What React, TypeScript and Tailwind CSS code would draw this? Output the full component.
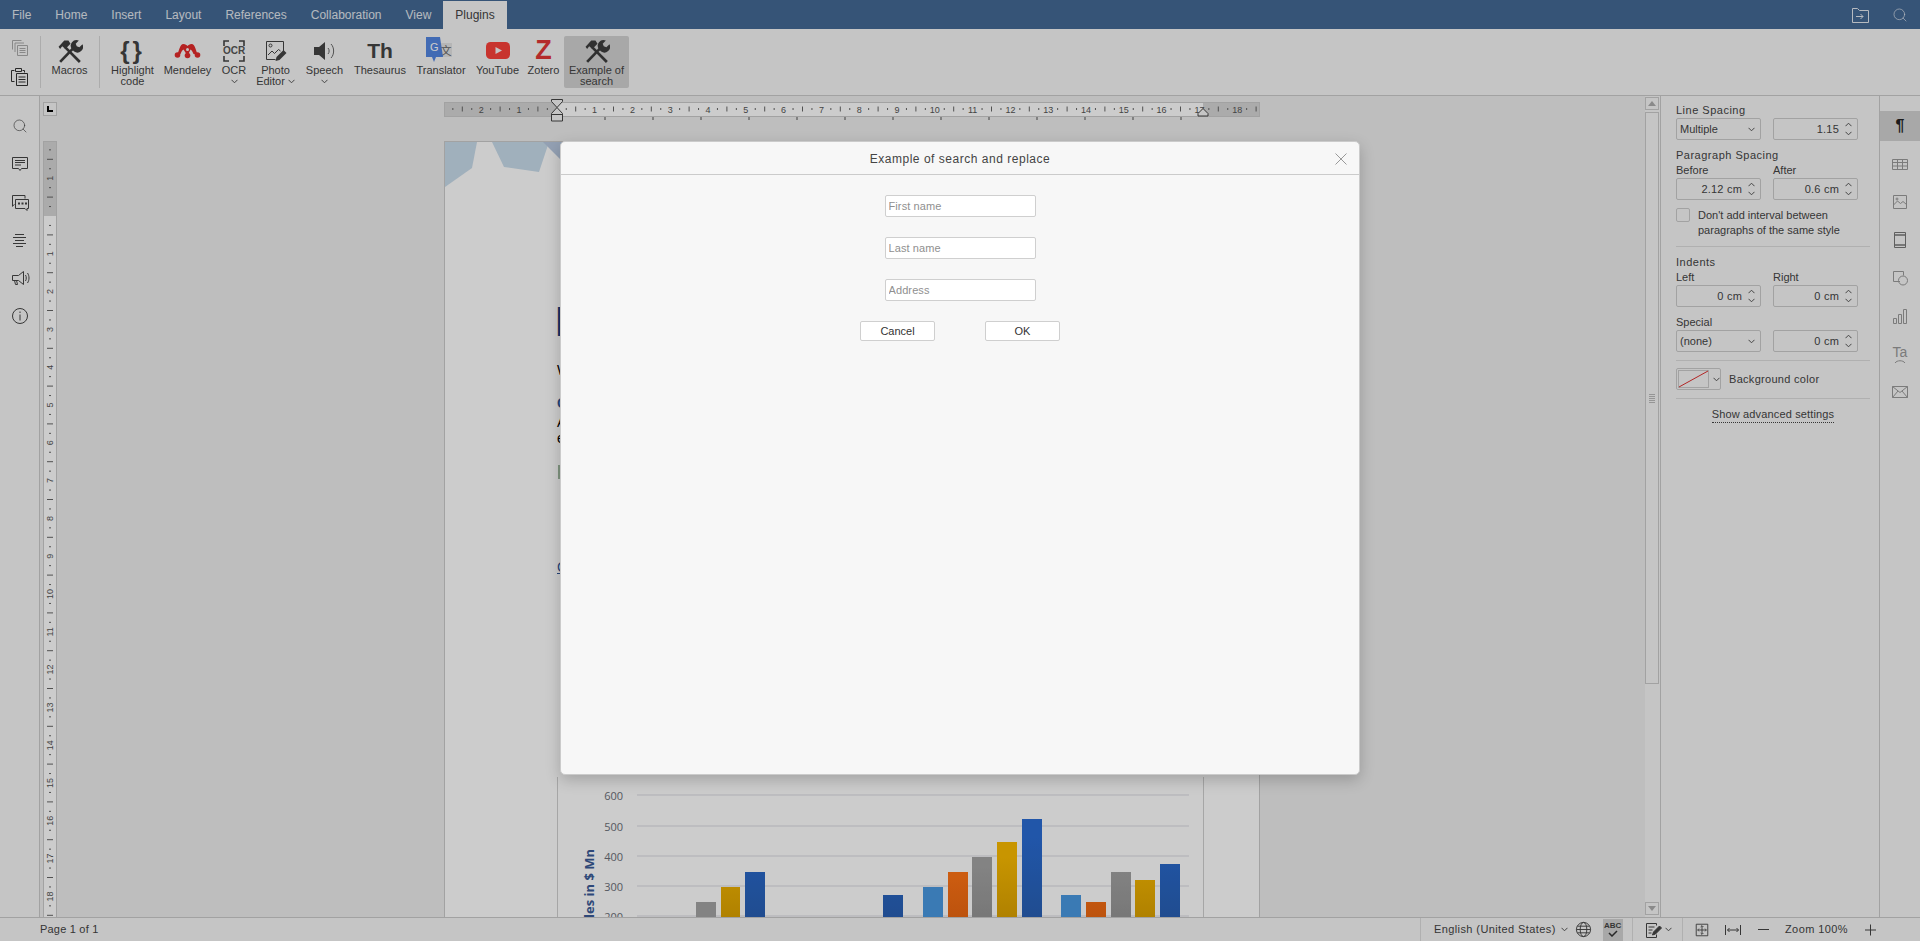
import type { ReactNode } from "react";
import { Search } from "lucide-react";

const tabs = ["File", "Home", "Insert", "Layout", "References", "Collaboration", "View"];

function Chevron({ className = "" }: { className?: string }) {
  return (
    <svg width="7" height="5" viewBox="0 0 7 5" className={className}>
      <path d="M0.5 0.8 3.5 3.8 6.5 0.8" fill="none" stroke="#555" strokeWidth="1" />
    </svg>
  );
}

function ChevronUp() {
  return (
    <svg width="7" height="5" viewBox="0 0 7 5">
      <path d="M0.5 4.2 3.5 1.2 6.5 4.2" fill="none" stroke="#555" strokeWidth="1" />
    </svg>
  );
}

function ToolsIcon() {
  return (
    <svg width="26" height="26" viewBox="0 0 25 25">
      <path d="M8 9 22 23M3 23 15.500 10" fill="none" stroke="#3d3d3d" strokeWidth="2.600" />
      <path d="M14.500 11A5.500 5.500 0 0 1 21 2.500L18 5.500l1 2.500 2.500 1 3-3A5.500 5.500 0 0 1 16.500 13z" fill="#3d3d3d" />
      <path d="M1.500 8.500 7 2.500h4l2 3-5 5-3-2.500-2 2.500z" fill="#3d3d3d" />
    </svg>
  );
}

function MendeleyIcon() {
  return (
    <svg width="27" height="16" viewBox="0 0 27 16">
      <g fill="#e32b2b">
        <circle cx="3.500" cy="12" r="2.800" />
        <circle cx="23.500" cy="12" r="2.800" />
        <circle cx="13.500" cy="12.500" r="2.800" />
        <path d="M3 12C5 9 5.500 1 9.500 1c2 0 3 1 4 2 1-1 2-2 4-2 4 0 4.500 8 6.500 11l-4.500-1c-1-2-1.500-4-3-4.500L14 12h-1L9.500 6.500C8 7 7.500 9 6.500 11z" />
      </g>
      <circle cx="13.500" cy="6.500" r="1.500" fill="#f7f7f7" />
    </svg>
  );
}

function OcrIcon() {
  return (
    <div className="relative flex h-[22px] w-[22px] items-center justify-center">
      <svg width="22" height="22" viewBox="0 0 22 22" className="absolute inset-0">
        <path d="M1 6V1h5M16 1h5v5M21 16v5h-5M6 21H1v-5" fill="none" stroke="#444" strokeWidth="1.600" />
      </svg>
      <span className="text-[10px] leading-none font-bold text-[#555]">OCR</span>
    </div>
  );
}

function PhotoIcon() {
  return (
    <svg width="22" height="22" viewBox="0 0 22 22">
      <path d="M1.500 1.500h17v10M1.500 1.500v18h9" fill="none" stroke="#444" />
      <circle cx="5.500" cy="5.500" r="1.500" fill="none" stroke="#444" />
      <path d="M3 15l4-4 2.500 2.500 4-4 2 1.500" fill="none" stroke="#444" />
      <path d="M10.500 21l1-4 7-7 3 3-7 7z" fill="#444" />
    </svg>
  );
}

function SpeechIcon() {
  return (
    <svg width="24" height="22" viewBox="0 0 24 22">
      <path d="M1 7h5l6-5v18l-6-5H1z" fill="#444" />
      <path d="M15 8c1.500 1.500 1.500 4.500 0 6M18 4c3.500 3.500 3.500 10.500 0 14" fill="none" stroke="#666" />
    </svg>
  );
}

function TranslatorIcon() {
  return (
    <svg width="30" height="28" viewBox="0 0 30 28">
      <rect x="13" y="6" width="13" height="14" fill="#e4e4e4" />
      <text x="14.500" y="17.500" fontSize="11" fill="#666" fontFamily="'Noto Sans CJK SC',sans-serif">文</text>
      <path d="M0 0h14l3 20H10l-2 5-2-5H0z" fill="#4a80e0" opacity="0.95" />
      <text x="4" y="14" fontSize="11" fill="#fff" fontFamily="'Liberation Sans',sans-serif">G</text>
    </svg>
  );
}

function YoutubeIcon() {
  return (
    <svg width="26" height="20" viewBox="0 0 26 20">
      <rect x="1" y="1" width="24" height="17" rx="4.500" fill="#fa413a" />
      <path d="M10.500 6 17 9.500 10.500 13z" fill="#f7f7f7" />
    </svg>
  );
}

function ToolButton({ w, icon, label, label2, chevron, active }: {
  w: string;
  icon: ReactNode;
  label: string;
  label2?: ReactNode;
  chevron?: boolean;
  active?: boolean;
}) {
  return (
    <div className={`flex h-[52px] shrink-0 flex-col items-center rounded-[2px] ${w} ${active ? "bg-[#d2d2d2]" : ""}`}>
      <div className="flex h-[29px] items-center justify-center">{icon}</div>
      <div className="text-center text-[11px] leading-[11px] whitespace-nowrap text-[#444]">{label}</div>
      {label2 && <div className="flex items-center gap-[3px] text-[11px] leading-[11px] whitespace-nowrap text-[#444]">{label2}</div>}
      {chevron && <Chevron className="mt-[3px]" />}
    </div>
  );
}

function Toolbar() {
  return (
    <div className="flex h-[67px] shrink-0 items-start border-b border-[#cbcbcb] bg-[#f7f7f7] pt-[7px]">
      <div className="flex h-[52px] w-[41px] shrink-0 flex-col items-center justify-center gap-[11px] border-r border-[#d8d8d8] pr-[1px]">
        <svg width="17" height="17" viewBox="0 0 17 17" fill="none" stroke="#aaa">
          <path d="M1.500 10.500v-9h9M4 13V4h9" />
          <path d="M6.500 6.500h10v10h-10zM8.500 9.500h6M8.500 11.500h6M8.500 13.500h6" />
        </svg>
        <svg width="17" height="19" viewBox="0 0 17 19" fill="none" stroke="#333">
          <path d="M3.500 14.500h-3v-11h3M4.500 1.500h6v3h-6zM11.500 3.500h2v2" />
          <path d="M5.500 6.500h11v12h-11zM7.500 10h7M7.500 12.500h7M7.500 15h7" />
        </svg>
      </div>
      <div className="flex h-[52px] w-[59px] shrink-0 flex-col items-center border-r border-[#d8d8d8] pr-[1px]">
        <div className="flex h-[29px] items-center"><ToolsIcon /></div>
        <div className="text-[11px] leading-[11px] text-[#444]">Macros</div>
      </div>
      <div className="ml-[6px] flex items-start gap-[2px]">
        <ToolButton
          w="w-[53px]"
          icon={<span className="text-[24px] leading-none font-bold tracking-[3px] text-[#444]">{"{}"}</span>}
          label="Highlight"
          label2="code"
        />
        <ToolButton w="w-[53px]" icon={<MendeleyIcon />} label="Mendeley" />
        <ToolButton w="w-[36px]" icon={<OcrIcon />} label="OCR" chevron />
        <ToolButton
          w="w-[43px]"
          icon={<PhotoIcon />}
          label="Photo"
          label2={<>Editor<Chevron /></>}
        />
        <ToolButton w="w-[51px]" icon={<SpeechIcon />} label="Speech" chevron />
        <ToolButton
          w="w-[56px]"
          icon={<span className="text-[21px] leading-none font-bold text-[#444]">Th</span>}
          label="Thesaurus"
        />
        <ToolButton w="w-[62px]" icon={<TranslatorIcon />} label="Translator" />
        <ToolButton w="w-[47px]" icon={<YoutubeIcon />} label="YouTube" />
        <ToolButton
          w="w-[41px]"
          icon={<span className="text-[27px] leading-none font-bold text-[#e23636]">Z</span>}
          label="Zotero"
        />
        <ToolButton w="w-[65px] -ml-[2px]" icon={<ToolsIcon />} label="Example of" label2="search" active />
      </div>
    </div>
  );
}

function HRuler() {
  const zero = 112.8;
  const step = 37.8 / 4;
  const ticks = [];
  for (let i = -11; i <= 74; i++) {
    const x = zero + i * step;
    if (x > 814) break;
    if (i === 0) continue;
    if (i % 4 === 0) {
      ticks.push(<text key={i} x={x} y="16.500" fontSize="9" fill="#555" textAnchor="middle">{Math.abs(i / 4)}</text>);
    } else {
      const long = Math.abs(i % 4) === 2;
      ticks.push(<line key={i} x1={x} x2={x} y1={long ? 10.500 : 12} y2={long ? 15.500 : 14} stroke="#666" />);
    }
  }
  const stops = [];
  for (let x = 161; x < 760; x += 48) stops.push(<line key={x} x1={x} x2={x} y1="21" y2="24" stroke="#555" />);
  return (
    <svg width="816" height="28" viewBox="0 0 816 28" className="ml-[387px] block shrink-0 font-['Liberation_Sans',sans-serif]">
      <rect x="0.500" y="6.500" width="815" height="14" fill="#fff" stroke="#cbcbcb" />
      <rect x="1" y="7" width="112" height="13" fill="#d6d6d6" />
      <rect x="759" y="7" width="56" height="13" fill="#d6d6d6" />
      {ticks}
      {stops}
      <path d="M107.500 3.500h11v2l-5.500 6-5.500-6z" fill="#f7f7f7" stroke="#444" />
      <path d="M113 11.500l5.500 6v7.500h-11v-7.500z" fill="#f7f7f7" stroke="#444" />
      <path d="M107.500 18.500h11" stroke="#444" />
      <path d="M759 12.500l5 5v2.500h-10v-2.500z" fill="#f7f7f7" stroke="#444" />
    </svg>
  );
}

function VRuler() {
  const zero = 75;
  const step = 37.8 / 4;
  const ticks = [];
  for (let i = -7; i <= 74; i++) {
    const y = zero + i * step;
    if (i === 0) continue;
    if (i % 4 === 0) {
      ticks.push(
        <text key={i} x="7" y={y} fontSize="9" fill="#555" textAnchor="middle" dominantBaseline="central" transform={`rotate(-90 7 ${y})`}>
          {Math.abs(i / 4)}
        </text>
      );
    } else {
      const long = Math.abs(i % 4) === 2;
      ticks.push(<line key={i} x1={long ? 4 : 6} x2={long ? 10 : 8} y1={y} y2={y} stroke="#666" />);
    }
  }
  return (
    <svg width="14" height="776" viewBox="0 0 14 776" className="block shrink-0 font-['Liberation_Sans',sans-serif]">
      <rect x="0.500" y="0.500" width="13" height="790" fill="#fff" stroke="#cbcbcb" />
      <rect x="1" y="1" width="12" height="74" fill="#d6d6d6" />
      {ticks}
    </svg>
  );
}

const bars = [
  { x: 139, w: 20, y: 125, c: "#a4a4a4" },
  { x: 164, w: 19, y: 110, c: "url(#gold)" },
  { x: 188, w: 20, y: 95, c: "url(#blue)" },
  { x: 326, w: 20, y: 118, c: "url(#blue)" },
  { x: 366, w: 20, y: 110, c: "#4999e2" },
  { x: 391, w: 20, y: 95, c: "url(#orange)" },
  { x: 415, w: 20, y: 80, c: "url(#gray)" },
  { x: 440, w: 20, y: 65, c: "url(#gold)" },
  { x: 465, w: 20, y: 42, c: "url(#blue)" },
  { x: 504, w: 20, y: 118, c: "#4999e2" },
  { x: 529, w: 20, y: 125, c: "url(#orange)" },
  { x: 554, w: 20, y: 95, c: "url(#gray)" },
  { x: 578, w: 20, y: 103, c: "url(#gold)" },
  { x: 603, w: 20, y: 87, c: "url(#blue)" },
];

function Chart() {
  const grid = [
    { y: 18, t: "600" },
    { y: 49, t: "500" },
    { y: 79, t: "400" },
    { y: 109, t: "300" },
    { y: 139, t: "200" },
  ];
  return (
    <svg width="648" height="140" viewBox="0 0 648 140" className="mt-auto ml-[112px] block shrink-0">
      <defs>
        <linearGradient id="blue" gradientUnits="userSpaceOnUse" x1="0" y1="60" x2="0" y2="140">
          <stop offset="0" stopColor="#2a6cd4" />
          <stop offset="1" stopColor="#2860b4" />
        </linearGradient>
        <linearGradient id="gold" gradientUnits="userSpaceOnUse" x1="0" y1="80" x2="0" y2="140">
          <stop offset="0" stopColor="#fabb00" />
          <stop offset="1" stopColor="#dca200" />
        </linearGradient>
        <linearGradient id="gray" gradientUnits="userSpaceOnUse" x1="0" y1="90" x2="0" y2="140">
          <stop offset="0" stopColor="#a4a4a4" />
          <stop offset="1" stopColor="#969696" />
        </linearGradient>
        <linearGradient id="orange" gradientUnits="userSpaceOnUse" x1="0" y1="100" x2="0" y2="140">
          <stop offset="0" stopColor="#ff7314" />
          <stop offset="1" stopColor="#ec6812" />
        </linearGradient>
      </defs>
      <line x1="0.500" x2="0.500" y1="0" y2="140" stroke="#d0d0d0" />
      <line x1="646.500" x2="646.500" y1="0" y2="140" stroke="#d0d0d0" />
      {grid.map((g) => (
        <g key={g.t}>
          <line x1="80" x2="632" y1={g.y} y2={g.y} stroke="#dcdce2" strokeWidth="1.200" />
          <text x="66" y={g.y + 5} fontSize="11" textAnchor="end" fill="#6b6f78" fontFamily="'Open Sans',sans-serif">{g.t}</text>
        </g>
      ))}
      {bars.map((b) => (
        <rect key={b.x} x={b.x} y={b.y} width={b.w} height={140 - b.y} fill={b.c} />
      ))}
      <text transform="rotate(-90 37 72)" x="37" y="72" fontSize="13" fontWeight="bold" fill="#3a5a96" fontFamily="'Open Sans',sans-serif" textAnchor="end">
        Sales in $ Mn
      </text>
    </svg>
  );
}

function Page() {
  return (
    <div className="ml-[387px] flex h-[776px] w-[816px] shrink-0 flex-col overflow-hidden border-x border-t border-[#cbcbcb] bg-white">
      <svg width="120" height="46" viewBox="0 0 120 46" className="block shrink-0">
        <path d="M0 0h32l-5 26L0 45z" fill="#c9dceb" />
        <path d="M47 0h57l-10 30-35-5z" fill="#c9dceb" />
        <path d="M98 0h22v22z" fill="#b8c9e0" />
      </svg>
      <div className="flex flex-col pl-[110px]">
        <div className="mt-[113px] h-[40px] text-[43px] leading-[40px] font-bold text-[#1f3f7f]">M</div>
        <div className="mt-[21px] ml-[2px] h-[16px] text-[14px] leading-[16px] text-black">W</div>
        <div className="mt-[17px] ml-[2px] h-[16px] text-[14px] leading-[16px] font-bold text-[#2f5597]">C</div>
        <div className="mt-[4px] ml-[2px] h-[14px] text-[14px] leading-[14px] text-black">A</div>
        <div className="mt-[2px] ml-[2px] h-[14px] text-[14px] leading-[14px] text-black">e</div>
        <div className="mt-[20px] ml-[3px] h-[14px] w-[2px] bg-[#9fb99f]" />
        <div className="mt-[80px] ml-[2px] h-[16px] text-[14px] leading-[16px] text-[#2f5597] underline">C</div>
      </div>
      <Chart />
    </div>
  );
}

function Scrollbar() {
  return (
    <div className="flex w-[15px] shrink-0 flex-col gap-[2px] pt-[1px] pr-[1px] pb-[2px]">
      <div className="flex h-[13px] items-center justify-center border border-[#cbcbcb] bg-[#f7f7f7]">
        <div className="h-0 w-0 border-x-[4px] border-b-[5px] border-x-transparent border-b-[#adadad]" />
      </div>
      <div className="flex h-[572px] items-center justify-center border border-[#cbcbcb] bg-[#f7f7f7]">
        <div className="flex w-[6px] flex-col gap-[1px]">
          {[0, 1, 2, 3, 4].map((i) => (
            <div key={i} className="h-px bg-[#bbb]" />
          ))}
        </div>
      </div>
      <div className="flex-1" />
      <div className="flex h-[13px] items-center justify-center border border-[#cbcbcb] bg-[#f7f7f7]">
        <div className="h-0 w-0 border-x-[4px] border-t-[5px] border-x-transparent border-t-[#adadad]" />
      </div>
    </div>
  );
}

function SelectBox({ value }: { value: string }) {
  return (
    <div className="flex h-[22px] w-[85px] items-center justify-between rounded-[2px] border border-[#cbcbcb] pr-[5px] pl-[3px] text-[11px] text-[#444]">
      <span>{value}</span>
      <Chevron />
    </div>
  );
}

function SpinBox({ value }: { value: string }) {
  return (
    <div className="flex h-[22px] w-[85px] items-center justify-end gap-[6px] rounded-[2px] border border-[#cbcbcb] pr-[5px] text-[11px] tracking-[0.2px] text-[#444]">
      <span>{value}</span>
      <div className="flex flex-col gap-[4px]">
        <ChevronUp />
        <Chevron />
      </div>
    </div>
  );
}

function SettingsPanel() {
  const label = "h-[12px] text-[11px] leading-[12px] text-[#444]";
  const heading = "h-[12px] text-[11px] leading-[12px] tracking-[0.5px] text-[#444]";
  const row = "flex gap-[12px]";
  const half = "w-[85px]";
  return (
    <div className="w-[220px] shrink-0 border-x border-[#cbcbcb] pt-[8px] pr-[9px] pl-[15px]">
      <div className={heading}>Line Spacing</div>
      <div className={`mt-[2px] ${row}`}>
        <SelectBox value="Multiple" />
        <SpinBox value="1.15" />
      </div>
      <div className={`mt-[9px] ${heading}`}>Paragraph Spacing</div>
      <div className={`mt-[3px] ${row}`}>
        <div className={`${half} ${label}`}>Before</div>
        <div className={`${half} ${label}`}>After</div>
      </div>
      <div className={`mt-[2px] ${row}`}>
        <SpinBox value="2.12 cm" />
        <SpinBox value="0.6 cm" />
      </div>
      <div className="mt-[8px] flex gap-[8px]">
        <div className="h-[14px] w-[14px] shrink-0 rounded-[2px] border border-[#cbcbcb]" />
        <div className="text-[11px] leading-[15px] text-[#444]">
          Don't add interval between
          <br />
          paragraphs of the same style
        </div>
      </div>
      <div className="mt-[8px] h-px w-[194px] bg-[#dcdcdc]" />
      <div className={`mt-[9px] ${heading}`}>Indents</div>
      <div className={`mt-[3px] ${row}`}>
        <div className={`${half} ${label}`}>Left</div>
        <div className={`${half} ${label}`}>Right</div>
      </div>
      <div className={`mt-[2px] ${row}`}>
        <SpinBox value="0 cm" />
        <SpinBox value="0 cm" />
      </div>
      <div className={`mt-[9px] ${label}`}>Special</div>
      <div className={`mt-[2px] ${row}`}>
        <SelectBox value="(none)" />
        <SpinBox value="0 cm" />
      </div>
      <div className="mt-[8px] h-px w-[194px] bg-[#dcdcdc]" />
      <div className="mt-[7px] flex items-center gap-[8px]">
        <div className="flex h-[22px] w-[45px] items-center gap-[4px] rounded-[2px] border border-[#cbcbcb] pl-[1px]">
          <svg width="31" height="18" viewBox="0 0 31 18">
            <rect x="0.500" y="0.500" width="30" height="17" fill="none" stroke="#cbcbcb" />
            <line x1="1" y1="17" x2="30" y2="1" stroke="#e03030" />
          </svg>
          <Chevron />
        </div>
        <span className="text-[11px] tracking-[0.3px] text-[#444]">Background color</span>
      </div>
      <div className="mt-[8px] h-px w-[194px] bg-[#dcdcdc]" />
      <div className="mt-[9px] flex w-[194px] justify-center">
        <span className="border-b border-dotted border-[#444] pb-[1px] text-[11px] leading-[13px] tracking-[0.15px] text-[#444]">
          Show advanced settings
        </span>
      </div>
    </div>
  );
}

function LeftRail() {
  const s = { width: 24, height: 24, viewBox: "0 0 24 24", fill: "none", stroke: "#444" };
  return (
    <div className="flex w-[40px] shrink-0 flex-col items-center gap-[8px] border-r border-[#cbcbcb] pt-[15px]">
      <div className="flex h-[30px] items-center"><Search size={16} strokeWidth={1} color="#444" /></div>
      <div className="flex h-[30px] items-center">
        <svg {...s}><path d="M4.500 5.500h15v11h-6l-1.500 2-1.500-2h-6zM7 8.500h10M7 10.500h10M7 13h6" /></svg>
      </div>
      <div className="flex h-[30px] items-center">
        <svg {...s}>
          <path d="M17 8.500v-3H4.500v11M4.500 16l2-1.500" />
          <path d="M7.500 9.500h13v9h-1.500v2l-2-2h-9.500z" />
          <path d="M10 13.500h2M13.500 13.500h2M17 13.500h2" strokeWidth="2" />
        </svg>
      </div>
      <div className="flex h-[30px] items-center">
        <svg {...s}><path d="M7 6.500h9M5 9.500h13M7 12.500h9M5 15.500h13M8 18.500h7" /></svg>
      </div>
      <div className="flex h-[30px] items-center">
        <svg {...s}>
          <path d="M4.500 9.500h6l5-4v13l-5-4h-6zM6.500 14.500l1 4h2l-1-4M17.500 9c1 1.500 1 4.500 0 6M19.500 7c2 3 2 7 0 10" />
        </svg>
      </div>
      <div className="flex h-[30px] items-center">
        <svg {...s}><circle cx="12" cy="12" r="7.500" /><path d="M12 10.500v6M12 7.500v1.500" /></svg>
      </div>
    </div>
  );
}

function RightRail() {
  const s = { width: 20, height: 20, viewBox: "0 0 20 20", fill: "none", stroke: "#9a9a9a" };
  return (
    <div className="flex w-[40px] shrink-0 flex-col items-center gap-[8px] pt-[15px]">
      <div className="flex h-[30px] w-full items-center justify-center bg-[#d2d2d2] text-[16px] font-bold text-[#222]">¶</div>
      <div className="flex h-[30px] items-center">
        <svg {...s}><path d="M2.500 5.500h15v10h-15zM2.500 8.500h15M2.500 12h15M7.500 5.500v10M12.500 5.500v10" /></svg>
      </div>
      <div className="flex h-[30px] items-center">
        <svg {...s}><path d="M3.500 3.500h13v13h-13zM3.500 13l4-4 3 2.500 2.500-2 3.500 3" /><circle cx="7" cy="7" r="1" /></svg>
      </div>
      <div className="flex h-[30px] items-center">
        <svg {...s} stroke="#777"><path d="M4.500 2.500h11v15h-11z" /><path d="M4.500 5h11M4.500 15h11" strokeWidth="1.500" /></svg>
      </div>
      <div className="flex h-[30px] items-center">
        <svg {...s}><path d="M10 13.500H3.500v-10h10v4" /><circle cx="13" cy="12.500" r="4.500" /></svg>
      </div>
      <div className="flex h-[30px] items-center">
        <svg {...s}><path d="M3.500 12.500h3v5h-3zM8.500 8.500h3v9h-3zM13.500 3.500h3v14h-3z" /></svg>
      </div>
      <div className="flex h-[30px] items-center">
        <div className="flex flex-col items-center text-[14px] leading-[14px] text-[#9a9a9a]">
          Ta
          <svg width="12" height="4" viewBox="0 0 12 4" fill="none" stroke="#9a9a9a"><path d="M1 4c2-3 8-3 10 0" /></svg>
        </div>
      </div>
      <div className="flex h-[30px] items-center">
        <svg {...s}><path d="M2.500 4.500h15v11h-15zM2.500 4.500l7.500 6 7.500-6M2.500 15.500l5.500-6.500M17.500 15.500l-5.500-6.500" /></svg>
      </div>
    </div>
  );
}

function StatusBar() {
  const s = { viewBox: "0 0 18 18", fill: "none", stroke: "#444" };
  return (
    <div className="flex h-[24px] shrink-0 items-center border-t border-[#cbcbcb] bg-[#f7f7f7] text-[11px] text-[#444]">
      <div className="w-[1420px] shrink-0 pl-[40px] tracking-[0.2px]">Page 1 of 1</div>
      <div className="flex h-full w-[212px] shrink-0 items-center border-l border-[#dcdcdc] pl-[13px]">
        <span className="tracking-[0.4px]">English (United States)</span>
        <Chevron className="ml-[5px]" />
        <svg {...s} width="17" height="17" className="ml-[7px]">
          <circle cx="9" cy="9" r="7.500" />
          <path d="M1.500 9h15M2.500 5.500h13M2.500 12.500h13" />
          <ellipse cx="9" cy="9" rx="3.500" ry="7.500" />
        </svg>
        <div className="ml-[11px] flex h-[22px] w-[20px] flex-col items-center justify-center bg-[#d2d2d2]">
          <span className="text-[8px] leading-[8px] font-bold">ABC</span>
          <svg width="12" height="7" viewBox="0 0 12 7" fill="none" stroke="#333" strokeWidth="1.500"><path d="M2 3l3 3 5-5" /></svg>
        </div>
      </div>
      <div className="flex h-full w-[50px] shrink-0 items-center border-l border-[#dcdcdc] pl-[11px]">
        <svg {...s} width="18" height="18">
          <path d="M12.500 4.500v-2h-10v14h10v-3M4.500 6h6M4.500 9h4M4.500 12h3" />
          <path d="M8.500 14l1-3 6-6 2 2-6 6z" fill="#444" />
        </svg>
        <Chevron className="ml-[3px]" />
      </div>
      <div className="flex h-full flex-1 items-center border-l border-[#dcdcdc] pl-[11px]">
        <svg {...s} width="16" height="16">
          <path d="M2.500 2.500h13v13h-13zM9 4.500v9M4.500 9h9M7.500 5.500 9 4l1.500 1.500M7.500 12.500 9 14l1.500-1.500M5.500 7.500 4 9l1.500 1.500M12.500 7.500 14 9l-1.500 1.500" />
        </svg>
        <svg {...s} width="18" height="18" className="ml-[14px]">
          <path d="M1.500 4v10M16.500 4v10M3.500 9h11M5.500 7 3.500 9l2 2M12.500 7l2 2-2 2" />
        </svg>
        <div className="ml-[16px] h-px w-[11px] bg-[#444]" />
        <span className="ml-[16px] tracking-[0.4px]">Zoom 100%</span>
        <svg {...s} width="14" height="14" viewBox="0 0 14 14" className="ml-[15px]"><path d="M2 7h11M7.500 1.500v11" /></svg>
      </div>
    </div>
  );
}

function PluginDialog() {
  const input = "h-[22px] w-[151px] rounded-[2px] border border-[#cfcfcf] bg-white px-[3px] text-[11px] tracking-[0.1px] outline-none placeholder:text-[#8f8f8f]";
  const button = "h-[20px] w-[75px] rounded-[2px] border border-[#cfcfcf] bg-white text-[11px] text-[#333]";
  return (
    <div className="absolute top-[141px] left-[560px] flex h-[634px] w-[800px] flex-col rounded-[5px] border border-[#cbcbcb] bg-[#f7f7f7] shadow-[0_5px_15px_rgba(0,0,0,0.2)]">
      <div className="flex h-[33px] shrink-0 items-center justify-center border-b border-[#cbcbcb] pt-[1px]">
        <span className="text-[12px] tracking-[0.52px] text-[#444]">Example of search and replace</span>
        <svg width="12" height="12" viewBox="0 0 12 12" className="absolute top-[11px] right-[12px]" fill="none" stroke="#999">
          <path d="M0.500 0.500 11.500 11.500M11.500 0.500 0.500 11.500" />
        </svg>
      </div>
      <div className="flex flex-col items-center gap-[20px] pt-[20px]">
        <input className={input} placeholder="First name" readOnly />
        <input className={input} placeholder="Last name" readOnly />
        <input className={input} placeholder="Address" readOnly />
        <div className="flex gap-[50px]">
          <button className={button}>Cancel</button>
          <button className={button}>OK</button>
        </div>
      </div>
    </div>
  );
}

export default function App() {
  return (
    <div className="relative flex h-[941px] w-[1920px] flex-col overflow-hidden bg-[#f7f7f7] font-['Liberation_Sans',Arial,sans-serif]">
      {/* tabs */}
      <div className="flex h-[29px] shrink-0 items-end bg-[#446995] text-[12px] text-white">
        {tabs.map((t) => (
          <div key={t} className="flex h-[28px] items-center px-3 opacity-85">{t}</div>
        ))}
        <div className="flex h-[28px] items-center bg-[#f7f7f7] px-3 text-[#444]">Plugins</div>
        <div className="flex-1" />
        <svg width="17" height="15" viewBox="0 0 17 15" fill="none" stroke="#e4e9f0" className="mr-[23px] mb-[6px]">
          <path d="M0.500 14.500v-14h5l2 2h9v12zM4 8.500h7M8.500 6 11 8.500 8.500 11" />
        </svg>
        <Search size={16} strokeWidth={1} color="#e4e9f0" className="mr-[12px] mb-[6px]" />
      </div>
      <Toolbar />
      {/* workspace */}
      <div className="flex min-h-0 flex-1">
        <LeftRail />
        <div className="flex min-w-0 flex-1 flex-col bg-[#eeeeee]">
          <div className="relative h-[45px] shrink-0">
            <div className="flex items-start pl-[3px]">
              <div className="mt-[6px] flex h-[14px] w-[14px] shrink-0 items-center justify-center border border-[#cbcbcb] bg-[#f7f7f7]">
                <div className="h-[6px] w-[6px] border-b-2 border-l-2 border-black" />
              </div>
              <HRuler />
            </div>
          </div>
          <div className="flex min-h-0 flex-1 overflow-hidden pl-[3px]">
            <VRuler />
            <Page />
          </div>
        </div>
        <Scrollbar />
        <SettingsPanel />
        <RightRail />
      </div>
      <StatusBar />
      {/* modal mask */}
      <div className="absolute inset-0 bg-black/20" />
      <PluginDialog />
    </div>
  );
}
